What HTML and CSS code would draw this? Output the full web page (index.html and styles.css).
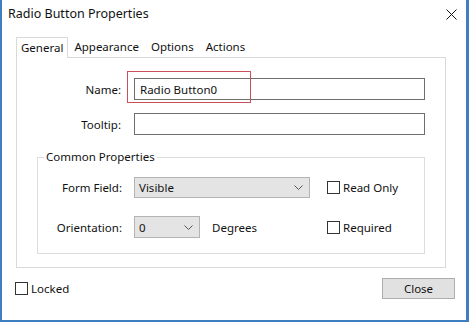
FILE: index.html
```html
<!DOCTYPE html>
<html lang="en">
<head>
  <meta charset="UTF-8" />
  <title>Radio Button Properties</title>
  <link rel="stylesheet" href="styles.css">
</head>
<body>
  <div class="window">
    <div class="titlebar">
      <span class="title">Radio Button Properties</span>
      <svg class="close-x" width="11" height="11" viewBox="0 0 11 11">
        <path d="M0.5 0.5 L10.5 10.5 M10.5 0.5 L0.5 10.5" stroke="#111" stroke-width="1" fill="none"/>
      </svg>
    </div>

    <div class="tabs">
      <div class="tab active">General</div>
      <div class="tab">Appearance</div>
      <div class="tab">Options</div>
      <div class="tab">Actions</div>
    </div>

    <div class="panel">
      <div class="row">
        <label class="label" for="name">Name:</label>
        <div class="field-wrap">
          <input class="text-input" id="name" type="text" value="Radio Button0">
          <div class="highlight"></div>
        </div>
      </div>
      <div class="row row-tooltip">
        <label class="label" for="tooltip">Tooltip:</label>
        <input class="text-input" id="tooltip" type="text">
      </div>

      <div class="group">
        <div class="legend">Common Properties</div>
        <div class="grow">
          <span class="glabel">Form Field:</span>
          <div class="select wide">
            <span>Visible</span>
            <svg width="9" height="5" viewBox="0 0 9 5"><path d="M0.5 0.5 L4.5 4.5 L8.5 0.5" stroke="#555" fill="none"/></svg>
          </div>
          <div class="check"><span class="box"></span>Read Only</div>
        </div>
        <div class="grow grow-2">
          <span class="glabel">Orientation:</span>
          <div class="select narrow">
            <span>0</span>
            <svg width="9" height="5" viewBox="0 0 9 5"><path d="M0.5 0.5 L4.5 4.5 L8.5 0.5" stroke="#555" fill="none"/></svg>
          </div>
          <span class="unit">Degrees</span>
          <div class="check"><span class="box"></span>Required</div>
        </div>
      </div>
    </div>

    <div class="footer">
      <div class="check"><span class="box"></span>Locked</div>
      <button class="btn">Close</button>
    </div>
  </div>
</body>
</html>
```

FILE: styles.css
```css
body {
  margin: 0;
  padding: 0;
  font-family: 'Noto Sans', 'Open Sans', sans-serif;
  font-size: 11.5px;
  color: #111;
  background: #fff;
}
.window {
  width: 469px;
  height: 322px;
  box-sizing: border-box;
  border-left: 2px solid #3f7fbf;
  border-right: 3px solid #3f7fbf;
  border-bottom: 2px solid #3f7fbf;
  background: #fff;
}
.titlebar {
  height: 27px;
  display: flex;
  align-items: center;
  justify-content: space-between;
  padding: 0 9px 0 6px;
}
.title {
  font-size: 12.5px;
}
.close-x {
  margin-top: 1px;
}
.tabs {
  display: flex;
  margin: 10px 0 0 14px;
  height: 20px;
  align-items: flex-end;
}
.tab {
  height: 20px;
  line-height: 19px;
  padding: 0 6px;
  box-sizing: border-box;
}
.tab.active {
  border: 1px solid #d9d9d9;
  border-bottom: none;
  height: 21px;
  margin-bottom: -1px;
  padding: 0 4px;
  background: #fff;
  position: relative;
  z-index: 1;
}
.panel {
  margin-left: 14px;
  width: 430px;
  height: 211px;
  box-sizing: border-box;
  border: 1px solid #d9d9d9;
  padding-top: 20px;
}
.row {
  display: flex;
  align-items: center;
}
.row-tooltip {
  margin-top: 13px;
}
.label {
  width: 104px;
  text-align: right;
  margin-right: 13px;
}
.field-wrap {
  position: relative;
}
.text-input {
  width: 291px;
  height: 22px;
  box-sizing: border-box;
  border: 1px solid #6e6e6e;
  font: inherit;
  padding: 0 5px;
  color: #111;
  margin: 0;
}
.highlight {
  position: absolute;
  left: -7px;
  top: -7px;
  width: 124px;
  height: 32px;
  border: 1px solid #c8505a;
  box-sizing: border-box;
}
.group {
  position: relative;
  margin: 22px 0 0 20px;
  width: 388px;
  height: 97px;
  box-sizing: border-box;
  border: 1px solid #dcdcdc;
  padding-top: 18px;
}
.legend {
  position: absolute;
  left: 6px;
  top: -9px;
  background: #fff;
  padding: 0 2px;
  line-height: 16px;
}
.grow {
  display: flex;
  align-items: center;
  height: 22px;
}
.grow-2 {
  margin-top: 18px;
}
.glabel {
  width: 84px;
  text-align: right;
  margin-right: 12px;
}
.select {
  height: 22px;
  box-sizing: border-box;
  border: 1px solid #b4b4b4;
  background: #e4e4e4;
  display: flex;
  align-items: center;
  justify-content: space-between;
  padding: 0 6px 0 4px;
}
.select.wide {
  width: 176px;
  height: 21px;
}
.select.narrow {
  width: 66px;
}
.unit {
  margin-left: 12px;
}
.grow .check {
  position: absolute;
  left: 289px;
}
.check {
  display: flex;
  align-items: center;
}
.box {
  width: 13px;
  height: 13px;
  box-sizing: border-box;
  border: 1px solid #333;
  background: #fff;
  margin-right: 3px;
}
.footer {
  display: flex;
  justify-content: space-between;
  align-items: center;
  padding: 10px 11px 0 13px;
}
.btn {
  width: 73px;
  height: 21px;
  border: 1px solid #adadad;
  background: #e1e1e1;
  font: inherit;
  color: #111;
  padding: 0;
}
```
